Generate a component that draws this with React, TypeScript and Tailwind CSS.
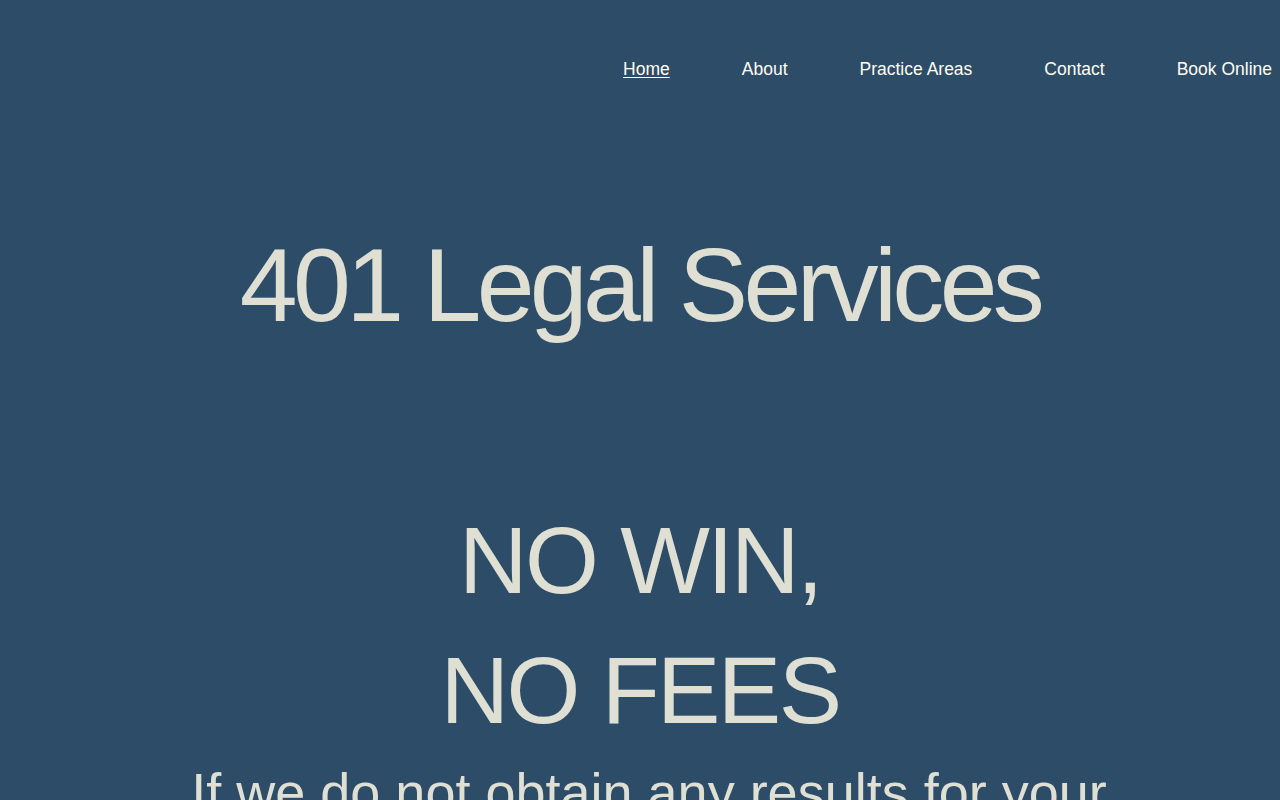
const navItems = ['Home', 'About', 'Practice Areas', 'Contact', 'Book Online']

export default function App() {
  return (
    <div className="min-h-screen h-[800px] overflow-hidden bg-[#2c4c68] text-[#dfe0d3] font-['Liberation_Sans',Arial,sans-serif]">
      {/* Header nav */}
      <header className="pt-[59px] pr-2">
        <nav className="flex justify-end gap-[72px] text-[17.5px] leading-[20px] text-[#fffdf0]">
          {navItems.map((item, i) => (
            <a key={item} href="#" className={i === 0 ? 'underline underline-offset-2' : ''}>
              {item}
            </a>
          ))}
        </nav>
      </header>

      {/* Hero */}
      <main className="flex flex-col items-center text-center">
        <h1 className="mt-[154px] text-[104px] leading-none tracking-[-0.045em] font-normal">
          401 Legal Services
        </h1>
        <h2 className="mt-[158px] text-[95px] leading-[130px] tracking-[-2.6px] font-normal">
          NO WIN,
          <br />
          NO FEES
        </h2>
        <p className="mt-[10px] ml-[18px] text-[54px] leading-none whitespace-nowrap">
          If we do not obtain any results for your
        </p>
      </main>
    </div>
  )
}
